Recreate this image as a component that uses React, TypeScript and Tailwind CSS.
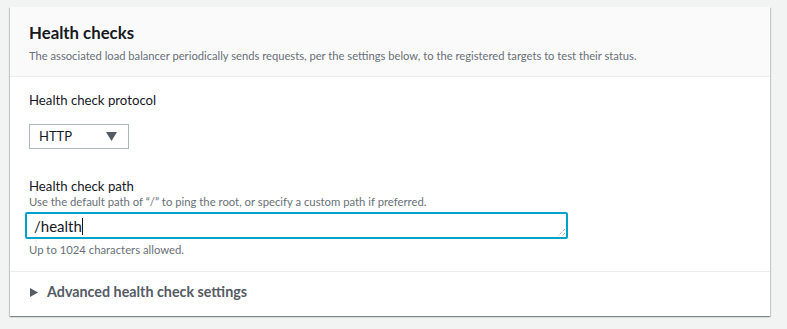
export default function App() {
  return (
    <div
      className="min-h-[329px] w-[787px] bg-[#f2f3f3] pt-[7px] pl-[10px] text-[#16191f]"
      style={{ fontFamily: 'Lato, "Noto Sans", Arial, sans-serif' }}
    >
      <div className="w-[760px] bg-white shadow-[0_1px_1px_0_rgba(0,28,36,0.3),1px_1px_1px_0_rgba(0,28,36,0.15),-1px_1px_1px_0_rgba(0,28,36,0.15)]">
        <div className="h-[70px] border-b border-[#eaeded] bg-[#fafafa] px-[19px] pt-[14px]">
          <h2 className="text-[16.8px] font-bold leading-[24px] text-[#16191f]">Health checks</h2>
          <p className="mt-[3px] text-[11.2px] leading-[16px] text-[#687078]">
            The associated load balancer periodically sends requests, per the settings below, to the registered targets to test their status.
          </p>
        </div>
        <div className="px-[19px] pt-[12px] pb-[13px]">
          <div className="text-[13.2px] leading-[22px]">Health check protocol</div>
          <div className="mt-[13px] flex h-[25px] w-[100px] items-center justify-between border border-[#aab7b8] pl-[9px] pr-[11px]">
            <span className="text-[13px]">HTTP</span>
            <svg width="11" height="9" viewBox="0 0 11 9">
              <path d="M0 0 L11 0 L5.5 9 Z" fill="#545b64" />
            </svg>
          </div>
          <div className="mt-[26px] text-[13.2px] leading-[22px]">Health check path</div>
          <div className="-mt-[1px] text-[11.3px] leading-[12px] text-[#687078]">
            Use the default path of “/” to ping the root, or specify a custom path if preferred.
          </div>
          <div className="relative mt-[4px] h-[27px] w-[543px] rounded-[2px] border-2 border-[#00a1c9] -ml-[4px]">
            <span className="absolute left-[7px] top-[1px] text-[15px] leading-[20px]">
              /health<span className="inline-block h-[17px] w-px translate-y-[3px] bg-[#16191f]" />
            </span>
            <svg className="absolute right-[1px] bottom-[1px]" width="8" height="8" viewBox="0 0 8 8">
              <path d="M8 1 L1 8 M8 5 L5 8" stroke="#888" strokeWidth="1" strokeDasharray="1 1" />
            </svg>
          </div>
          <div className="mt-[3px] text-[11.3px] leading-[16px] text-[#687078]">Up to 1024 characters allowed.</div>
        </div>
        <div className="flex h-[45px] items-center border-t border-[#eaeded] px-[19px] pb-[4px]">
          <svg width="8" height="9" viewBox="0 0 8 9" className="ml-[1px] mr-[9px]">
            <path d="M0 0 L8 4.5 L0 9 Z" fill="#545b64" />
          </svg>
          <span className="text-[14.3px] font-bold text-[#545b64]">Advanced health check settings</span>
        </div>
      </div>
    </div>
  );
}
